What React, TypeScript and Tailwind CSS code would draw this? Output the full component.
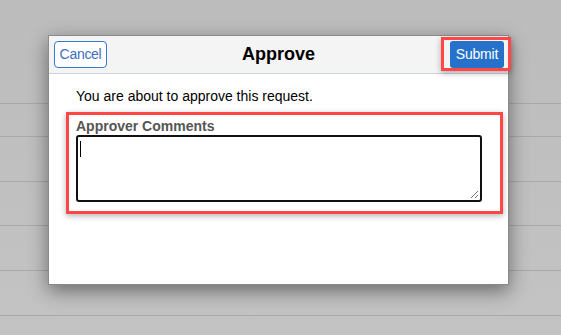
export default function App() {
  const rows = [103, 136, 181, 225, 270, 315];
  return (
    <div className="relative w-[561px] h-[335px] overflow-hidden bg-[#c1c1c1]" style={{ fontFamily: '"Liberation Sans", Arial, sans-serif' }}>
      {/* background page rows */}
      <div className="absolute inset-0 bg-gradient-to-b from-[#bcbcbc] to-[#c3c3c3]">
        {rows.map((y) => (
          <div key={y} className="absolute left-0 right-0 h-px bg-[#a9a9a9]" style={{ top: y }} />
        ))}
      </div>

      {/* dialog */}
      <div className="absolute left-[48px] top-[35px] w-[461px] h-[250px] bg-white border border-[#8a8a8a] shadow-[0_6px_18px_rgba(0,0,0,0.45)] flex flex-col">
        <div className="h-[38px] bg-[#f4f4f4] border-b border-[#cdd3dc] flex items-center justify-between pl-[5px] pr-[4px] relative">
          <button className="h-[27px] w-[53px] border border-[#3478d0] rounded-[4px] text-[14px] tracking-[-0.3px] text-[#3d6fc2] bg-white">Cancel</button>
          <div className="absolute left-0 right-0 text-center text-[18px] font-bold text-black pointer-events-none">Approve</div>
          <button className="h-[27px] w-[54px] rounded-[3px] text-[14px] tracking-[-0.2px] text-white bg-[#2671c9]">Submit</button>
        </div>
        <div className="pl-[27px] pt-[14px] text-[14px] text-black leading-[16px]">You are about to approve this request.</div>
        <div className="pl-[27px] pt-[14px] text-[14px] font-bold text-[#555] leading-[16px]">Approver Comments</div>
        <div className="pl-[27px] pt-[1px]">
          <div className="relative w-[406px] h-[67px] border-2 border-[#111] rounded-[3px] bg-white">
            <div className="absolute left-[2px] top-[4px] w-px h-[16px] bg-black" />
            <svg className="absolute right-[1px] bottom-[1px]" width="9" height="9" viewBox="0 0 9 9">
              <line x1="8" y1="1" x2="1" y2="8" stroke="#777" strokeWidth="1" />
              <line x1="8" y1="5" x2="5" y2="8" stroke="#777" strokeWidth="1" />
            </svg>
          </div>
        </div>
      </div>

      {/* highlight boxes */}
      <div className="absolute left-[441px] top-[37px] w-[70px] h-[34px] border-[3px] border-[#ff4747] shadow-[0_2px_6px_rgba(0,0,0,0.3)]" />
      <div className="absolute left-[66px] top-[112px] w-[437px] h-[102px] border-[3px] border-[#ff4747] shadow-[0_2px_6px_rgba(0,0,0,0.3)]" />
    </div>
  );
}
